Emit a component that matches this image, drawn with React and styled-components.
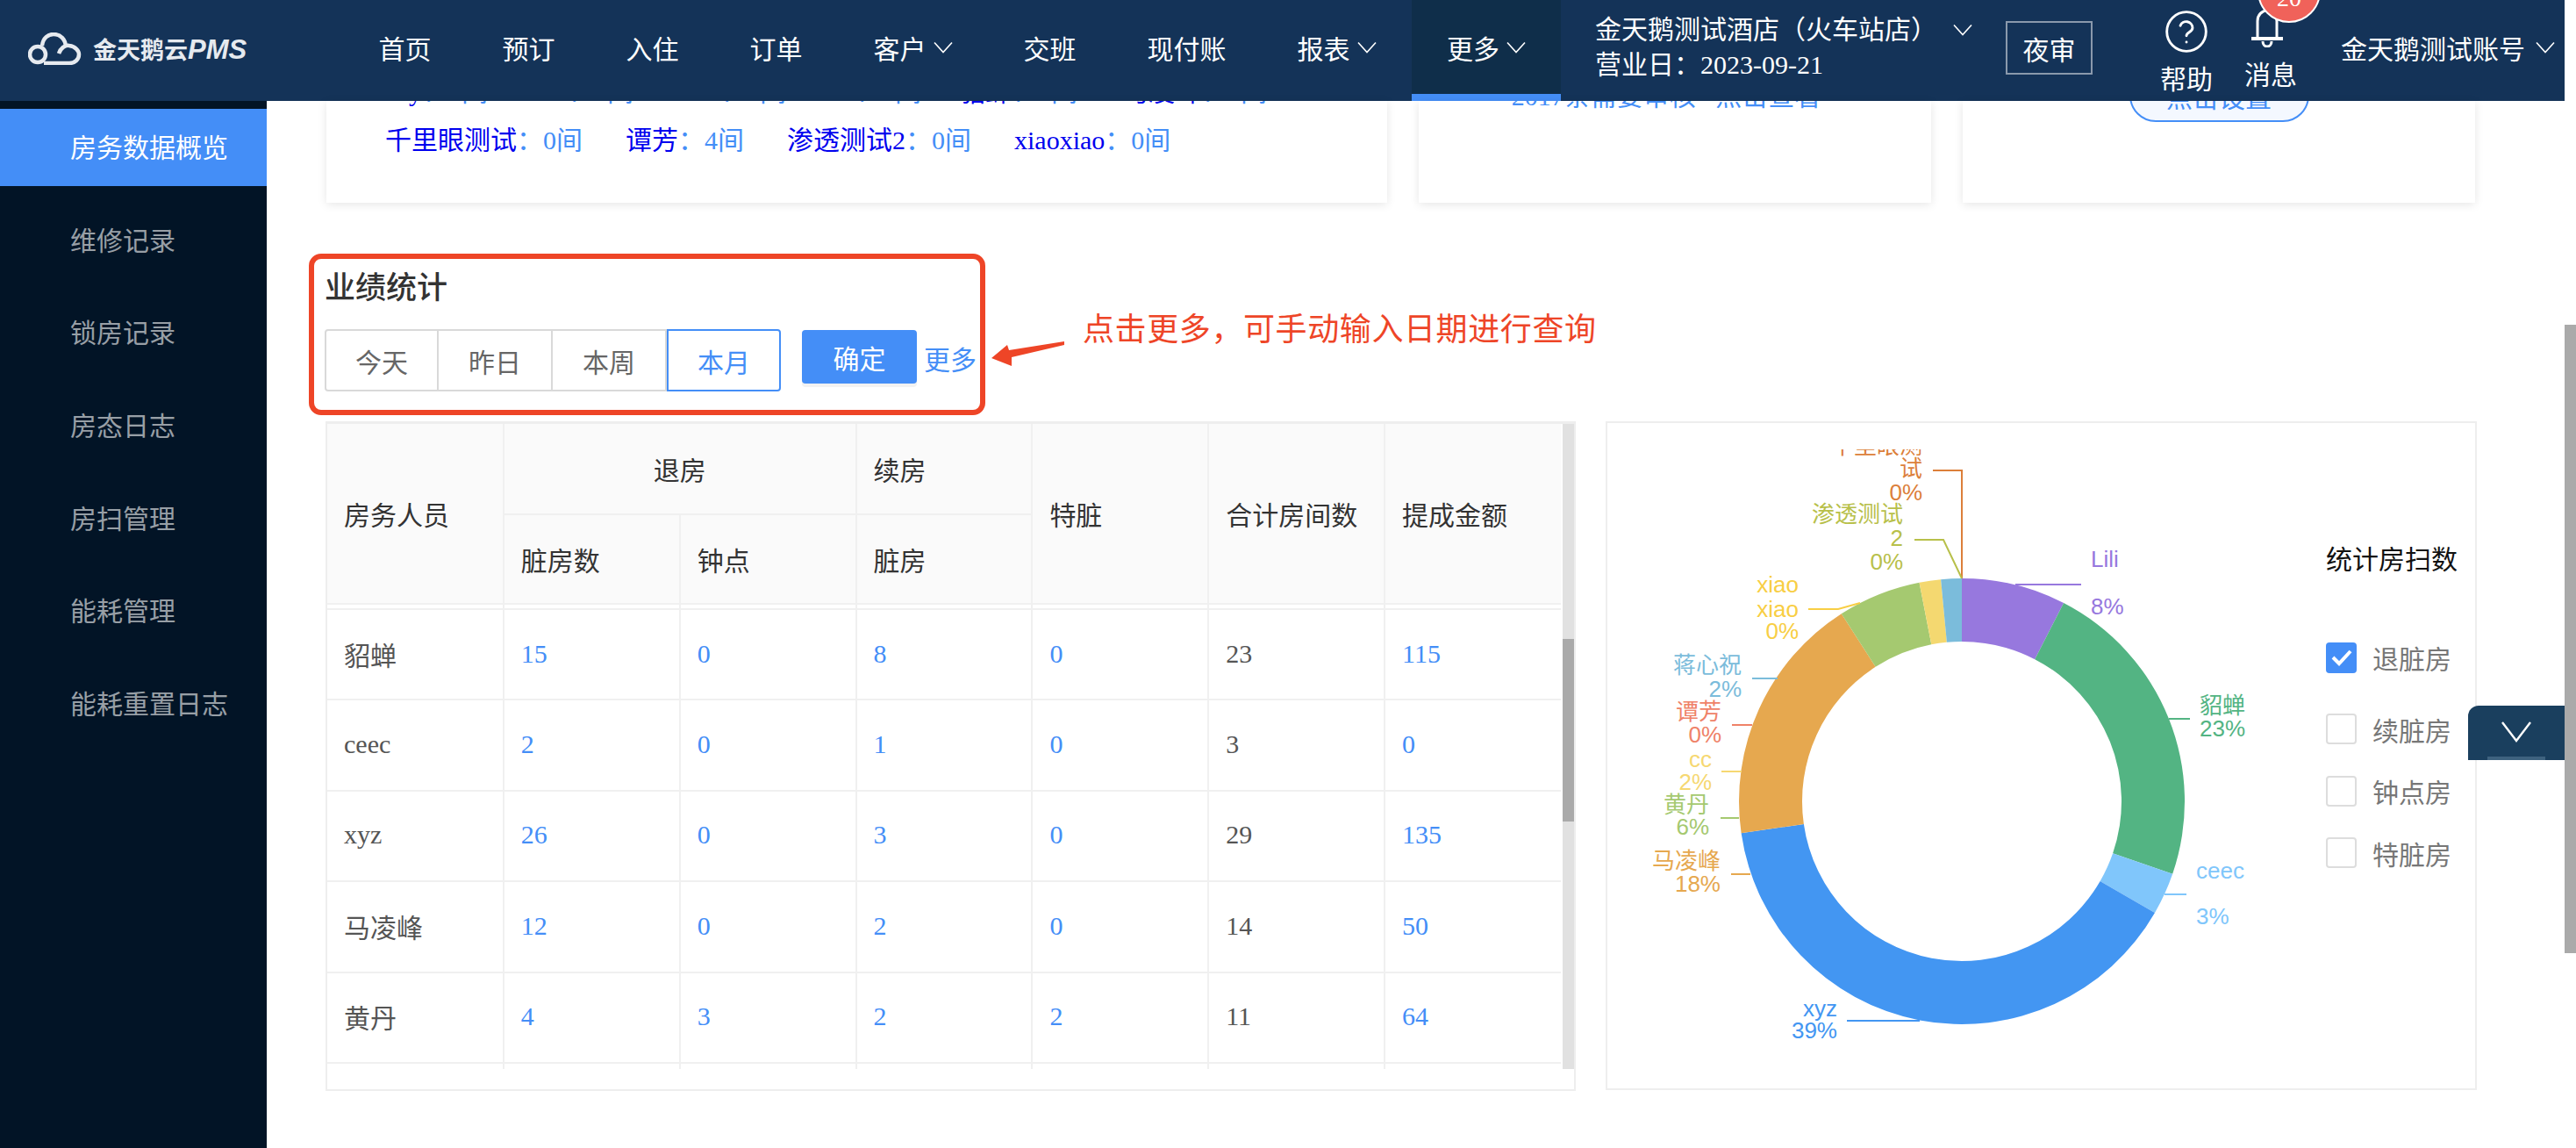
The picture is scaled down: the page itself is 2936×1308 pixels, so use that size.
import React from 'react';
import styled, { createGlobalStyle } from 'styled-components';

const BLUE = '#448ef7';
const LINE = '#f0f0f0';
// full-width punctuation, kept as escapes so it cannot turn into the narrow ascii forms
const COLON = '\uFF1A';
const COMMA = '\uFF0C';
const PAREN_L = '\uFF08';
const PAREN_R = '\uFF09';

const GlobalStyle = createGlobalStyle`
  html, body {
    margin: 0;
    width: 2936px;
    height: 1308px;
    overflow: hidden;
    background: #fff;
  }
  body {
    font-family: "Liberation Serif", "Noto Sans CJK SC", serif;
    font-size: 30px;
    color: #333;
  }
  * { box-sizing: border-box; }
`;

const Page = styled.div`
  display: flex;
  width: 2936px;
  height: 1308px;
  overflow: hidden;
`;
const Shell = styled.div`
  position: relative;
  width: 2923px;
  height: 1308px;
  display: flex;
  flex-direction: column;
`;
const PageScroll = styled.div`
  width: 13px;
  padding-top: 370px;
`;
const PageThumb = styled.div`
  height: 716px;
  background: #aaa;
`;

/* top bar */
const Header = styled.header`
  height: 115px;
  flex: none;
  display: flex;
  background: #143358;
  color: #fff;
`;
const Logo = styled.div`
  width: 391px;
  flex: none;
  padding-left: 32px;
  display: flex;
  align-items: center;
  gap: 13px;
  padding-bottom: 4px;
`;
const LogoText = styled.span`
  font-family: "Noto Sans CJK SC", sans-serif;
  font-weight: 700;
  font-size: 27px;
  color: #e6eaef;
  white-space: nowrap;
`;
const LogoLatin = styled.span`
  font-family: "Liberation Sans", sans-serif;
  font-style: italic;
  font-size: 31px;
`;
const NavItem = styled.div`
  height: 115px;
  flex: none;
  display: flex;
  align-items: center;
  gap: 8px;
  white-space: nowrap;
  border-bottom: 8px solid ${p => (p.$active ? BLUE : 'transparent')};
  background: ${p => (p.$active ? '#0f2e4a' : 'transparent')};
  padding: 0 ${p => (p.$active ? 40 : 40.5)}px;
`;
const HotelBlock = styled.div`
  margin-left: 39px;
  padding-top: 14px;
  width: 431px;
  flex: none;
`;
const HotelLine = styled.div`
  height: 40px;
  line-height: 40px;
  display: flex;
  align-items: center;
  gap: 18px;
  white-space: nowrap;
`;
const AuditButton = styled.div`
  margin: 24px 0 0 37px;
  width: 99px;
  height: 61px;
  border: 2px solid rgba(255, 255, 255, 0.5);
  display: flex;
  align-items: center;
  justify-content: center;
  flex: none;
`;
const IconAction = styled.div`
  position: relative;
  width: 60px;
  display: flex;
  flex-direction: column;
  align-items: center;
  flex: none;
  margin-left: ${p => p.$ml}px;
  padding-top: ${p => p.$pt}px;
  gap: ${p => p.$gap}px;
  line-height: 30px;
`;
const Badge = styled.div`
  position: absolute;
  left: 15px;
  top: -46px;
  width: 72px;
  height: 72px;
  padding-top: 16px;
  border-radius: 50%;
  background: #f0625a;
  border: 2px solid #fff;
  font-size: 28px;
  display: flex;
  align-items: center;
  justify-content: center;
`;
const BellWrap = styled.div`
  margin-right: 8px;
  height: 44px;
`;
const Account = styled.div`
  margin-left: 50px;
  height: 107px;
  display: flex;
  align-items: center;
  gap: 12px;
  white-space: nowrap;
`;

/* below the bar */
const Body = styled.div`
  flex: 1;
  display: flex;
  min-height: 0;
`;
const Sidebar = styled.nav`
  width: 304px;
  flex: none;
  background: #021426;
  padding-top: 9px;
  display: flex;
  flex-direction: column;
  gap: 17.7px;
`;
const SideItem = styled.div`
  height: 88px;
  flex: none;
  padding-left: 80px;
  line-height: 90px;
  color: ${p => (p.$active ? '#fff' : 'rgba(255, 255, 255, 0.6)')};
  background: ${p => (p.$active ? BLUE : 'transparent')};
`;
const Main = styled.main`
  flex: 1;
  padding-left: 48px;
  min-width: 0;
`;

const CardRow = styled.div`
  display: flex;
  gap: 36px;
  margin-left: 20px;
`;
const Card = styled.div`
  width: ${p => p.$w}px;
  height: 116px;
  background: #fff;
  overflow: hidden;
  box-shadow: 0 2px 10px rgba(0, 0, 0, 0.1);
`;
const StaffList = styled.div`
  margin-top: -37.5px;
  padding-left: 67px;
  line-height: 53px;
`;
const StaffRow = styled.div`
  display: flex;
  gap: ${p => p.$gap || 0}px;
  height: ${p => p.$h || 53}px;
  white-space: nowrap;
`;
const StaffItem = styled.div`
  ${p => p.$w && `width: ${p.$w}px; text-align: right;`}
`;
const StaffName = styled.span`
  color: #0000ee;
`;
const StaffCount = styled.span`
  color: ${BLUE};
`;
const AuditNote = styled.div`
  margin-top: -32px;
  padding-right: 20px;
  text-align: center;
  line-height: 53px;
  color: ${BLUE};
  white-space: pre;
`;
const SetupButton = styled.div`
  margin: -36px auto 0;
  width: 205px;
  height: 60px;
  border: 2px solid ${BLUE};
  border-radius: 30px;
  background: #f4f8ff;
  color: ${BLUE};
  display: flex;
  align-items: center;
  justify-content: center;
`;

const FilterRow = styled.div`
  display: flex;
  margin-top: 58px;
`;
const RedBox = styled.div`
  width: 771px;
  height: 184px;
  flex: none;
  border: 6px solid #ee4527;
  border-radius: 14px;
  padding: 12px 0 0 12px;
`;
const Title = styled.div`
  font-size: 35px;
  line-height: 44px;
  font-weight: 500;
`;
const FilterControls = styled.div`
  margin-top: 24px;
  display: flex;
  align-items: flex-start;
`;
const Tab = styled.div`
  width: 130px;
  height: 71px;
  border: 2px solid ${p => (p.$active ? BLUE : '#d9d9d9')};
  border-left-width: ${p => (p.$first || p.$active ? 2 : 0)}px;
  border-radius: ${p => (p.$first ? '4px 0 0 4px' : p.$active ? '0 4px 4px 0' : '0')};
  display: flex;
  align-items: center;
  justify-content: center;
  color: ${p => (p.$active ? BLUE : '#666')};
`;
const ConfirmButton = styled.div`
  margin: 1px 0 0 24px;
  width: 131px;
  height: 61px;
  border-radius: 4px;
  background: ${BLUE};
  color: #fff;
  box-shadow: 0 4px 0 #f2f2f2;
  display: flex;
  align-items: center;
  justify-content: center;
`;
const MoreLink = styled.div`
  margin-left: 8px;
  line-height: 71px;
  color: ${BLUE};
`;
const ArrowMark = styled.svg`
  flex: none;
  margin: 100px 0 0 7px;
  display: block;
`;
const Annotation = styled.div`
  margin: 61px 0 0 20px;
  font-family: "Noto Sans CJK SC", sans-serif;
  font-size: 36px;
  letter-spacing: 0.6px;
  line-height: 44px;
  color: #ee4527;
  white-space: nowrap;
`;

const PanelRow = styled.div`
  margin: 7px 0 0 19px;
  display: flex;
  gap: 34px;
`;
const TableBox = styled.div`
  width: 1425px;
  height: 763px;
  flex: none;
  border: 2px solid #eee;
  border-top-width: 3px;
  display: flex;
  align-items: flex-start;
`;
const TableClip = styled.div`
  width: 1406px;
  height: 735px;
  flex: none;
  overflow: hidden;
`;
const Table = styled.table`
  width: 1406px;
  table-layout: fixed;
  border-collapse: collapse;
`;
const Th = styled.th`
  height: 102.5px;
  padding: 0 0 0 ${p => (p.$center ? 0 : 19)}px;
  background: #fafafa;
  border: 2px solid ${LINE};
  border-top: 0;
  font-weight: 400;
  color: #333;
  text-align: ${p => (p.$center ? 'center' : 'left')};
  &:first-child { border-left: 0; }
  &:last-child { border-right: 0; }
`;
const Spacer = styled.td`
  height: 6px;
  padding: 0;
  border: 2px solid ${LINE};
  border-top: 0;
  &:first-child { border-left: 0; }
  &:last-child { border-right: 0; }
`;
const Td = styled.td`
  height: 103.4px;
  padding: 0 0 2px 19px;
  border: 2px solid ${LINE};
  border-top: 0;
  color: ${p => (p.$link ? BLUE : '#555')};
  &:first-child { border-left: 0; }
  &:last-child { border-right: 0; }
`;
const TableScroll = styled.div`
  margin-left: 2px;
  width: 13px;
  height: 735px;
  background: #e1e1e1;
  padding-top: 245px;
`;
const TableThumb = styled.div`
  height: 208px;
  background: #aaa;
`;

const ChartBox = styled.div`
  width: 993px;
  height: 762px;
  flex: none;
  border: 2px solid #eee;
  display: flex;
`;
const ChartSvg = styled.svg`
  display: block;
  flex: none;
  margin-top: 30px;
  font-family: "Liberation Sans", "Noto Sans CJK SC", sans-serif;
  font-size: 26px;
`;
const Legend = styled.div`
  margin-left: 49px;
  padding-top: 136px;
`;
const LegendTitle = styled.div`
  line-height: 40px;
  color: #111;
  white-space: nowrap;
  margin-bottom: 56px;
`;
const CheckRow = styled.div`
  height: 70.5px;
  margin-bottom: ${p => (p.$first ? 11 : 0)}px;
  display: flex;
  align-items: center;
  gap: 18px;
  color: #777;
  white-space: nowrap;
`;
const CheckBox = styled.div`
  width: 35px;
  height: 35px;
  border-radius: 4px;
  background: ${p => (p.$on ? BLUE : '#fff')};
  border: ${p => (p.$on ? 'none' : '2px solid #ddd')};
  display: flex;
  align-items: center;
  justify-content: center;
`;
const FloatTab = styled.div`
  position: absolute;
  right: 0;
  top: 804px;
  width: 110px;
  height: 62px;
  background: #1a3f5e;
  border-top-left-radius: 12px;
  display: flex;
  justify-content: center;
  padding-top: 18px;
`;
const FloatBar = styled.div`
  position: absolute;
  left: 22px;
  bottom: 0;
  width: 66px;
  height: 4px;
  background: #3e627f;
`;

const Chevron = () => (
  <svg width="22" height="14" viewBox="0 0 22 14" fill="none" stroke="#fff" strokeWidth="1.6">
    <path d="M1 1.5 11 12.5 21 1.5" />
  </svg>
);

const CloudLogo = () => (
  <svg width="61" height="37" viewBox="0 0 61 37" fill="none" stroke="#e6eaef" strokeWidth="4.5">
    <circle cx="11" cy="25" r="9" />
    <path d="M16 15C17 6 23 2 29 2c8 0 14 6 14 15" />
    <path d="M35 24c2-6 7-10 12-9 7 1 11 6 11 10 0 6-5 10-11 10H18" />
  </svg>
);

const HelpIcon = () => (
  <svg width="48" height="48" viewBox="2 2 20 20" fill="none" stroke="#fff" strokeWidth="1.2" strokeLinecap="round">
    <circle cx="12" cy="12" r="9.3" />
    <path d="M9.1 9.2a3 3 0 0 1 5.8 1c0 2-2.9 2.2-2.9 3.8" />
    <path d="M12 17h.01" />
  </svg>
);

const BellIcon = () => (
  <svg width="40" height="44" viewBox="0 0 40 44" fill="none" stroke="#fff" strokeWidth="3">
    <path d="M9 33V14C9 7 14 2 20 2s11 5 11 12v19" />
    <path d="M2 34h36" strokeWidth="4" />
    <path d="M15 37c0 8 10 8 10 0" />
  </svg>
);

const CheckMark = () => (
  <svg width="24" height="20" viewBox="0 0 24 20" fill="none" stroke="#fff" strokeWidth="4">
    <path d="M2 10 9 17 22 3" />
  </svg>
);

const staffPeek = [
  ['Ly', 117], ['Lili', 166], ['ceec', 174], ['cc', 154], ['貂蝉', 178], ['马凌峰', 216],
];
const staff = [
  ['千里眼测试', '0'], ['谭芳', '4'], ['渗透测试2', '0'], ['xiaoxiao', '0'],
];

const rows = [
  ['貂蝉', 15, 0, 8, 0, 23, 115],
  ['ceec', 2, 0, 1, 0, 3, 0],
  ['xyz', 26, 0, 3, 0, 29, 135],
  ['马凌峰', 12, 0, 2, 0, 14, 50],
  ['黄丹', 4, 3, 2, 2, 11, 64],
  ['', '', '', '', '', '', ''],
];

// donut, angles read clockwise from 12 o'clock
const CX = 2236;
const CY = 914;
const slices = [
  [0, 27.2, '#9778de'],
  [27.2, 109, '#53b483'],
  [109, 120, '#80c6fb'],
  [120, 261.8, '#4396f2'],
  [261.8, 327.3, '#e6a84f'],
  [327.3, 349, '#a5c970'],
  [349, 354.6, '#f4d870'],
  [354.6, 360, '#7bbcdb'],
];
const polar = (r, deg) => {
  const a = (deg * Math.PI) / 180;
  return [CX + r * Math.sin(a), CY - r * Math.cos(a)];
};
const slicePath = (from, to) => {
  const [a, b] = polar(254, from);
  const [c, d] = polar(254, to);
  const [e, f] = polar(182, to);
  const [g, h] = polar(182, from);
  const big = to - from > 180 ? 1 : 0;
  return `M${a} ${b}A254 254 0 ${big} 1 ${c} ${d}L${e} ${f}A182 182 0 ${big} 0 ${g} ${h}Z`;
};

const labels = [
  { c: '#dc7f3a', end: true, x: 2191, lines: [['千里眼测', 509], ['试', 535], ['0%', 562]], line: '2203,537 2236,537 2236,660' },
  { c: '#b8c04a', end: true, x: 2169, lines: [['渗透测试', 587], ['2', 614], ['0%', 641]], line: '2182,616 2215,616 2236,660' },
  { c: '#9778de', x: 2383, lines: [['Lili', 638], ['8%', 692]], line: '2297,667 2372,667' },
  { c: '#53b483', x: 2507, lines: [['貂蝉', 805], ['23%', 831]], line: '2472,820 2496,820' },
  { c: '#80c6fb', x: 2503, lines: [['ceec', 993], ['3%', 1045]], line: '2467,1020 2492,1020' },
  { c: '#4396f2', end: true, x: 2094, lines: [['xyz', 1150], ['39%', 1175]], line: '2105,1164 2188,1164' },
  { c: '#e6a84f', end: true, x: 1961, lines: [['马凌峰', 982], ['18%', 1008]], line: '1973,997 1995,997' },
  { c: '#a5c970', end: true, x: 1948, lines: [['黄丹', 918], ['6%', 943]], line: '1961,933 1982,933' },
  { c: '#f6d872', end: true, x: 1951, lines: [['cc', 866], ['2%', 892]], line: '1962,880 1985,880' },
  { c: '#ef8268', end: true, x: 1962, lines: [['谭芳', 812], ['0%', 838]], line: '1974,827 1997,827' },
  { c: '#7bbcdb', end: true, x: 1985, lines: [['蒋心祝', 759], ['2%', 786]], line: '1997,774 2026,774' },
  { c: '#f8ce44', end: true, x: 2050, lines: [['xiao', 667], ['xiao', 695], ['0%', 720]], line: '2061,695 2095,695 2120,688' },
];

const Donut = () => (
  <ChartSvg width="770" height="700" viewBox="1832 513 770 700">
    {slices.map(([from, to, color]) => (
      <path key={from} d={slicePath(from, to)} fill={color} />
    ))}
    {labels.map(l => (
      <g key={l.x + l.c} fill={l.c} textAnchor={l.end ? 'end' : 'start'}>
        <polyline points={l.line} fill="none" stroke={l.c} strokeWidth="2" />
        {l.lines.map(([text, y]) => (
          <text key={text + y} x={l.x} y={y} dominantBaseline="central">
            {text}
          </text>
        ))}
      </g>
    ))}
  </ChartSvg>
);

const App = () => (
  <Page>
    <GlobalStyle />
    <Shell>
      <Header>
        <Logo>
          <CloudLogo />
          <LogoText>
            金天鹅云<LogoLatin>PMS</LogoLatin>
          </LogoText>
        </Logo>
        <NavItem>首页</NavItem>
        <NavItem>预订</NavItem>
        <NavItem>入住</NavItem>
        <NavItem>订单</NavItem>
        <NavItem>客户<Chevron /></NavItem>
        <NavItem>交班</NavItem>
        <NavItem>现付账</NavItem>
        <NavItem>报表<Chevron /></NavItem>
        <NavItem $active>更多<Chevron /></NavItem>
        <HotelBlock>
          <HotelLine>{`金天鹅测试酒店${PAREN_L}火车站店${PAREN_R}`}<Chevron /></HotelLine>
          <HotelLine>{`营业日${COLON}2023-09-21`}</HotelLine>
        </HotelBlock>
        <AuditButton>夜审</AuditButton>
        <IconAction $ml={77} $pt={12} $gap={16}>
          <HelpIcon />
          帮助
        </IconAction>
        <IconAction $ml={36} $pt={10} $gap={17}>
          <BellWrap><BellIcon /></BellWrap>
          消息
          <Badge>20</Badge>
        </IconAction>
        <Account>金天鹅测试账号<Chevron /></Account>
      </Header>
      <Body>
        <Sidebar>
          <SideItem $active>房务数据概览</SideItem>
          <SideItem>维修记录</SideItem>
          <SideItem>锁房记录</SideItem>
          <SideItem>房态日志</SideItem>
          <SideItem>房扫管理</SideItem>
          <SideItem>能耗管理</SideItem>
          <SideItem>能耗重置日志</SideItem>
        </Sidebar>
        <Main>
          <CardRow>
            <Card $w={1209}>
              <StaffList>
                <StaffRow $h={55}>
                  {staffPeek.map(([name, w]) => (
                    <StaffItem key={name} $w={w}>
                      <StaffName>{name}</StaffName>
                      <StaffCount>{`${COLON}0间`}</StaffCount>
                    </StaffItem>
                  ))}
                </StaffRow>
                <StaffRow $gap={49}>
                  {staff.map(([name, count]) => (
                    <StaffItem key={name}>
                      <StaffName>{name}</StaffName>
                      <StaffCount>{`${COLON}${count}间`}</StaffCount>
                    </StaffItem>
                  ))}
                </StaffRow>
              </StaffList>
            </Card>
            <Card $w={584}>
              <AuditNote>{'2017条需要审核   点击查看'}</AuditNote>
            </Card>
            <Card $w={584}>
              <SetupButton>点击设置</SetupButton>
            </Card>
          </CardRow>

          <FilterRow>
            <RedBox>
              <Title>业绩统计</Title>
              <FilterControls>
                <Tab $first>今天</Tab>
                <Tab>昨日</Tab>
                <Tab>本周</Tab>
                <Tab $active>本月</Tab>
                <ConfirmButton>确定</ConfirmButton>
                <MoreLink>更多</MoreLink>
              </FilterControls>
            </RedBox>
            <ArrowMark width="84" height="30" viewBox="0 0 84 30">
              <path d="M0 19 18 4 20 10 83 0V4L23 18 23 28Z" fill="#ee4527" />
            </ArrowMark>
            <Annotation>{`点击更多${COMMA}可手动输入日期进行查询`}</Annotation>
          </FilterRow>

          <PanelRow>
            <TableBox>
              <TableClip>
                <Table>
                  <thead>
                    <tr>
                      <Th rowSpan={2}>房务人员</Th>
                      <Th colSpan={2} $center>退房</Th>
                      <Th>续房</Th>
                      <Th rowSpan={2}>特脏</Th>
                      <Th rowSpan={2}>合计房间数</Th>
                      <Th rowSpan={2}>提成金额</Th>
                    </tr>
                    <tr>
                      <Th>脏房数</Th>
                      <Th>钟点</Th>
                      <Th>脏房</Th>
                    </tr>
                  </thead>
                  <tbody>
                    <tr>
                      {[0, 1, 2, 3, 4, 5, 6].map(i => (
                        <Spacer key={i} />
                      ))}
                    </tr>
                    {rows.map((row, r) => (
                      <tr key={r}>
                        {row.map((cell, i) => (
                          <Td key={i} $link={i > 0 && i !== 5}>{cell}</Td>
                        ))}
                      </tr>
                    ))}
                  </tbody>
                </Table>
              </TableClip>
              <TableScroll>
                <TableThumb />
              </TableScroll>
            </TableBox>

            <ChartBox>
              <Donut />
              <Legend>
                <LegendTitle>统计房扫数</LegendTitle>
                <CheckRow $first>
                  <CheckBox $on><CheckMark /></CheckBox>退脏房
                </CheckRow>
                <CheckRow><CheckBox />续脏房</CheckRow>
                <CheckRow><CheckBox />钟点房</CheckRow>
                <CheckRow><CheckBox />特脏房</CheckRow>
              </Legend>
            </ChartBox>
          </PanelRow>
        </Main>
      </Body>
      <FloatTab>
        <svg width="34" height="24" viewBox="0 0 34 24" fill="none" stroke="#fff" strokeWidth="2.4">
          <path d="M1 1 17 22 33 1" />
        </svg>
        <FloatBar />
      </FloatTab>
    </Shell>
    <PageScroll>
      <PageThumb />
    </PageScroll>
  </Page>
);

export default App;
